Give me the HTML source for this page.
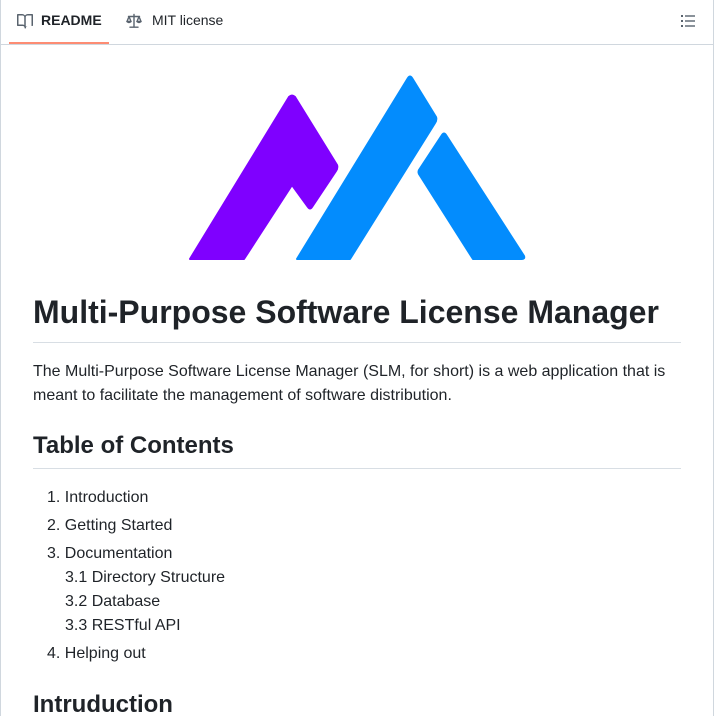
<!DOCTYPE html>
<html><head><meta charset="utf-8"><style>
*{margin:0;padding:0;box-sizing:border-box}
body{width:714px;height:716px;overflow:hidden;background:#fff;font-family:"Liberation Sans",Arial,sans-serif;color:#1f2328;position:relative}
.frame{position:absolute;left:0;top:0;width:714px;height:716px;border-left:1px solid #d0d7de;border-right:1px solid #d0d7de}
.tabs{position:absolute;left:0;top:0;width:714px;height:45px;border-bottom:1px solid #d0d7de}
.t{position:absolute;font-size:14px;line-height:20px;top:10px}
.ul{position:absolute;left:9px;top:42px;width:100px;height:2px;background:#fd8c73}
.a{position:absolute;left:33px;white-space:nowrap}
h1{position:absolute;left:33px;top:292px;font-size:32px;line-height:40px;font-weight:700}
h2{position:absolute;left:33px;font-size:24px;line-height:30px;font-weight:700}
.hr{position:absolute;left:33px;width:648px;height:1px;background:#d8dee4}
p,.li{font-size:16px;line-height:24px}
.li{position:absolute;white-space:nowrap}
</style></head><body>
<div class="frame"></div>
<div class="tabs">
<svg style="position:absolute;left:17px;top:13px" width="16" height="16" viewBox="0 0 16 16"><path fill="#59636e" d="M0 1.75A.75.75 0 0 1 .75 1h4.25c1.2 0 2.3.6 3 1.5.7-.9 1.8-1.5 3-1.5h4.25a.75.75 0 0 1 .75.75v10.5a.75.75 0 0 1-.75.75h-4.5a1.75 1.75 0 0 0-1.75 1.75.75.75 0 0 1-1.5 0A1.75 1.75 0 0 0 5.75 13H.75a.75.75 0 0 1-.75-.75Zm7.25 2.5A1.75 1.75 0 0 0 5.5 2.5h-4v9h4c.63 0 1.22.17 1.75.46Zm1.5 9.21A3.2 3.2 0 0 1 10.5 13h4V2.5h-4a1.75 1.75 0 0 0-1.75 1.75Z"/></svg>
<div class="t" style="left:41px;font-weight:700">README</div>
<svg style="position:absolute;left:126px;top:13px" width="16" height="16" viewBox="0 0 16 16"><g fill="none" stroke="#59636e" stroke-width="1.4" stroke-linecap="round" stroke-linejoin="round"><path d="M8 1.5V14M4 14.2h8M2.5 3.5h11M3 3.5 1 8.5h4Z M13 3.5 11 8.5h4Z"/><path d="M1 8.5q2 2 4 0M11 8.5q2 2 4 0"/></g></svg>
<div class="t" style="left:152px;color:#1f2328">MIT license</div>
<div class="ul"></div>
<svg style="position:absolute;left:681px;top:14px" width="14" height="14" viewBox="0 0 14 14"><g fill="#59636e"><rect x="0" y="1" width="2" height="2"/><rect x="0" y="6" width="2" height="2"/><rect x="0" y="11" width="2" height="2"/><rect x="4" y="1.3" width="10" height="1.4"/><rect x="4" y="6.3" width="10" height="1.4"/><rect x="4" y="11.3" width="10" height="1.4"/></g></svg>
</div>
<svg style="position:absolute;left:0;top:0" width="714" height="270" viewBox="0 0 714 270">
<path fill="#7f00ff" stroke="#7f00ff" stroke-width="2" stroke-linejoin="round" d="M190 259 L289 97 Q292 94 295 97 L337 165 Q338 168 336 171 L312 207 Q310 210 308 207 L292 185 L244 259 Z"/>
<path fill="#038cfd" stroke="#038cfd" stroke-width="2" stroke-linejoin="round" d="M297 259 L408 78 Q410 75 412 78 L436 117 Q437 120 435 123 L350 259 Z"/>
<path fill="#038cfd" stroke="#038cfd" stroke-width="2" stroke-linejoin="round" d="M419 170 L442 135 Q444 132 446 135 L524 256 Q525 259 522 259 L473 259 L419 174 Q418 172 419 170 Z"/>
</svg>
<h1>Multi-Purpose Software License Manager</h1>
<div class="hr" style="top:342px"></div>
<p class="a" style="top:360px;white-space:normal;width:650px">The Multi-Purpose Software License Manager (SLM, for short) is a web application that is meant to facilitate the management of software distribution.</p>
<h2 style="top:431px">Table of Contents</h2>
<div class="hr" style="top:468px"></div>
<div class="li" style="left:47px;top:486px">1. Introduction</div>
<div class="li" style="left:47px;top:514px">2. Getting Started</div>
<div class="li" style="left:47px;top:542px">3. Documentation</div>
<div class="li" style="left:65px;top:566px">3.1 Directory Structure</div>
<div class="li" style="left:65px;top:590px">3.2 Database</div>
<div class="li" style="left:65px;top:614px">3.3 RESTful API</div>
<div class="li" style="left:47px;top:642px">4. Helping out</div>
<h2 style="top:690px">Intruduction</h2>
</body></html>
